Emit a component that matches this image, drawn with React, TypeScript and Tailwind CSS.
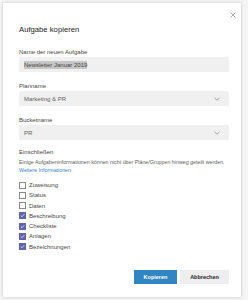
import React from 'react';

const options = [
	{ label: 'Zuweisung', checked: false },
	{ label: 'Status', checked: false },
	{ label: 'Daten', checked: false },
	{ label: 'Beschreibung', checked: true },
	{ label: 'Checkliste', checked: true },
	{ label: 'Anlagen', checked: true },
	{ label: 'Bezeichnungen', checked: true },
];

const Chevron = () => (
	<svg width="6" height="4" viewBox="0 0 6 4" fill="none" className="mr-[4px]">
		<path d="M0.5 0.8 L3 3.2 L5.5 0.8" stroke="#8a8886" strokeWidth="0.8" />
	</svg>
);

const Checkbox = ({ checked }: { checked: boolean }) =>
	checked ? (
		<span className="flex h-[7px] w-[7px] items-center justify-center bg-[#6264a7]">
			<svg width="5" height="5" viewBox="0 0 5 5" fill="none">
				<path d="M0.8 2.6 L2 3.7 L4.3 1.2" stroke="#ffffff" strokeWidth="0.7" />
			</svg>
		</span>
	) : (
		<span className="h-[7px] w-[7px] border border-[#8a8886] bg-white" />
	);

export default function App() {
	return (
		<div
			className="h-[300px] w-[248px] bg-[#f4f4f4] p-[3px] text-[#252423]"
			style={{ fontFamily: '"Liberation Sans", Arial, sans-serif' }}
		>
			<div className="relative flex h-[294px] w-[238px] flex-col bg-white pl-[16px] pr-[12px] shadow-[0_0_3px_rgba(0,0,0,0.2)]">
				<button className="absolute right-[5px] top-[9px] flex h-[6px] w-[6px] items-center justify-center">
					<svg width="6" height="6" viewBox="0 0 6 6">
						<path d="M0.5 0.5 L5.5 5.5 M5.5 0.5 L0.5 5.5" stroke="#8a8886" strokeWidth="0.7" />
					</svg>
				</button>

				<h1 className="mt-[22px] text-[7.7px] leading-[10px] text-[#252423]">Aufgabe kopieren</h1>

				<label className="mt-[13px] text-[6px] leading-[8px] text-[#484644]">Name der neuen Aufgabe</label>
				<div className="mt-[1px] flex h-[15px] items-center bg-[#f0f0f0] px-[5px]">
					<span className="bg-[#c6c6c6] text-[6px] leading-[8px] text-[#444444]">Newsletter Januar 2019</span>
				</div>

				<label className="mt-[10px] text-[6px] leading-[8px] text-[#484644]">Planname</label>
				<div className="mt-[1px] flex h-[15px] items-center justify-between bg-[#f0f0f0] px-[5px]">
					<span className="text-[6px] leading-[8px] text-[#605e5c]">Marketing &amp; PR</span>
					<Chevron />
				</div>

				<label className="mt-[10px] text-[6px] leading-[8px] text-[#484644]">Bucketname</label>
				<div className="mt-[1px] flex h-[15px] items-center justify-between bg-[#f0f0f0] px-[5px]">
					<span className="text-[6px] leading-[8px] text-[#605e5c]">PR</span>
					<Chevron />
				</div>

				<div className="mt-[8px] text-[6px] leading-[8px] text-[#484644]">Einschließen</div>
				<p className="mt-[2px] text-[5.3px] leading-[8px] text-[#605e5c]">
					Einige Aufgabeninformationen können nicht über Pläne/Gruppen hinweg geteilt werden.
					<br />
					<a className="text-[#2f7fc1]">Weitere Informationen.</a>
				</p>

				<ul className="mt-[6px] flex flex-col gap-[0.3px]">
					{options.map((option, key) => (
						<li key={key} className="flex h-[10px] items-center gap-[3px]">
							<Checkbox checked={option.checked} />
							<span className="text-[6px] leading-[8px] text-[#484644]">{option.label}</span>
						</li>
					))}
				</ul>

				<div className="mt-auto mb-[13px] flex justify-end gap-[3px]">
					<button className="h-[14px] w-[43px] bg-[#3185c1] text-[5.5px] font-bold text-white">Kopieren</button>
					<button className="h-[14px] w-[49px] bg-[#eeeef1] text-[5.5px] font-bold text-[#252423]">Abbrechen</button>
				</div>
			</div>
		</div>
	);
}
